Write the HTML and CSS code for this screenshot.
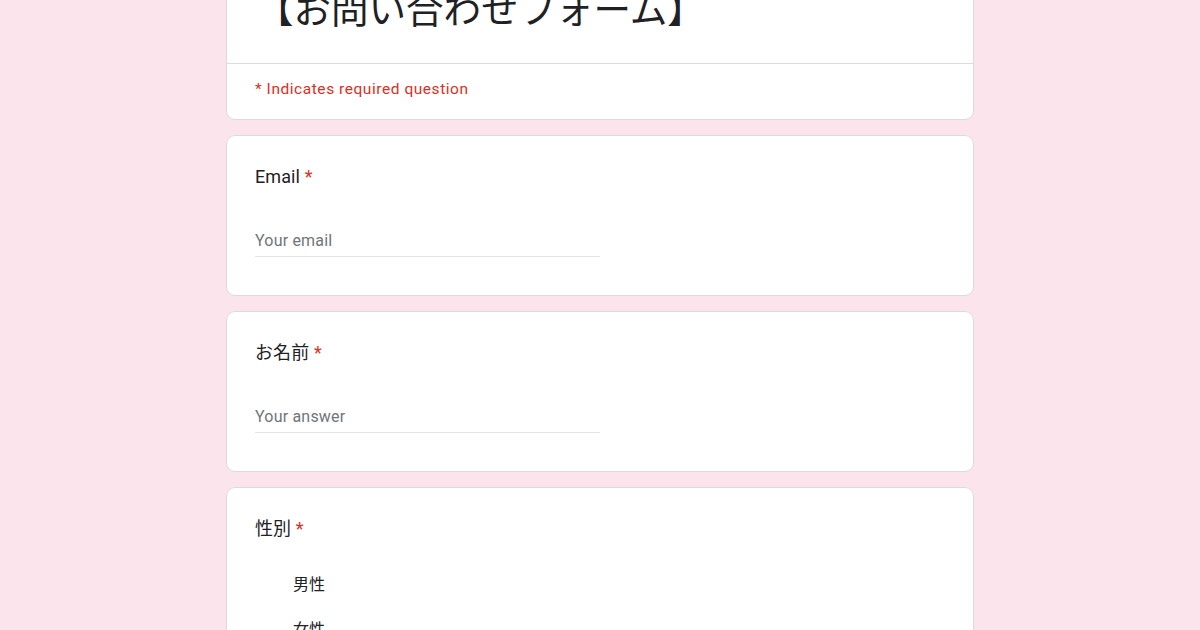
FILE: index.html
```html
<!DOCTYPE html>
<html lang="ja">
<head>
<meta charset="utf-8">
<title>【お問い合わせフォーム】</title>
<link rel="stylesheet" href="styles.css">
</head>
<body>
<div class="page">
  <div class="form">
    <div class="card head-card">
      <div class="title">【お問い合わせフォーム】</div>
      <div class="divider"></div>
      <div class="required-note">* Indicates required question</div>
    </div>

    <div class="card question">
      <div class="q-title">Email <span class="star">*</span></div>
      <div class="input"><span class="placeholder">Your email</span></div>
    </div>

    <div class="card question">
      <div class="q-title">お名前 <span class="star">*</span></div>
      <div class="input"><span class="placeholder">Your answer</span></div>
    </div>

    <div class="card question">
      <div class="q-title">性別 <span class="star">*</span></div>
      <div class="options">
        <div class="option">男性</div>
        <div class="option">女性</div>
        <div class="option">その他</div>
      </div>
    </div>
  </div>
</div>
</body>
</html>
```

FILE: styles.css
```css
html, body {
  margin: 0;
  padding: 0;
  background: #fce4ec;
  overflow: hidden;
}

body {
  font-family: Roboto, "Noto Sans CJK JP", sans-serif;
  color: #202124;
}

.page {
  display: flex;
  justify-content: center;
}

.form {
  width: 748px;
  margin-top: -60px;
  display: flex;
  flex-direction: column;
  gap: 15px;
}

.card {
  background: #fff;
  border: 1px solid #dadce0;
  border-radius: 9px;
  box-sizing: border-box;
}

.head-card {
  padding-top: 43px;
}

.title {
  font-family: "Noto Sans CJK JP", sans-serif;
  font-size: 37.5px;
  line-height: 45px;
  padding: 0 28px 34px 29px;
  color: #202124;
  white-space: nowrap;
}

.divider {
  height: 1px;
  background: #dadce0;
}

.required-note {
  font-family: Roboto, sans-serif;
  font-size: 15.5px;
  line-height: 20px;
  color: #d93025;
  padding: 15px 28px 20px;
  letter-spacing: 0.55px;
}

.question {
  height: 161px;
  padding: 27px 28px 0;
}

.q-title {
  font-size: 18px;
  line-height: 27px;
  letter-spacing: 0.1px;
  color: #202124;
}

.star {
  color: #d93025;
}

.input {
  width: 50%;
  margin-top: 39px;
  height: 27px;
  border-bottom: 1px solid #e4e4e4;
  box-sizing: content-box;
}

.placeholder {
  font-size: 16px;
  line-height: 24px;
  color: #70757a;
  letter-spacing: 0.2px;
}

.options {
  margin-top: 31px;
  padding-left: 38px;
  display: flex;
  flex-direction: column;
  gap: 21px;
}

.option {
  font-size: 16px;
  line-height: 24px;
  color: #202124;
}
```
